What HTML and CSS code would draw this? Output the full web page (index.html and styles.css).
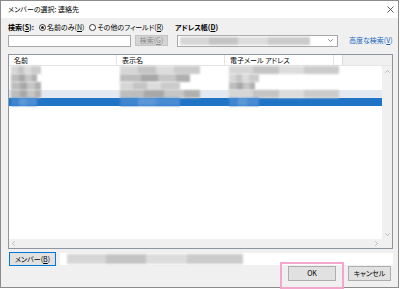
FILE: index.html
```html
<!DOCTYPE html>
<html lang="ja">
<head>
    <meta charset="UTF-8">
    <meta name="viewport" content="width=device-width, initial-scale=1.0">
    <title>メンバーの選択: 連絡先</title>
    <link rel="stylesheet" href="styles.css">
</head>
<body>
    <div class="window">
        <div class="titlebar">
            <span class="title">メンバーの選択: 連絡先</span>
            <svg class="close" width="7" height="7" viewBox="0 0 7 7">
                <path d="M0.5 0.5 L6.5 6.5 M6.5 0.5 L0.5 6.5" stroke="#333" stroke-width="0.8" fill="none"/>
            </svg>
        </div>

        <div class="content">
            <div class="search-row">
                <div class="search-opts">
                    <span class="bold">検索(<u>S</u>):</span>
                    <span class="radio checked"></span>
                    <span>名前のみ(<u>N</u>)</span>
                    <span class="radio"></span>
                    <span>その他のフィールド(<u>R</u>)</span>
                </div>
                <span class="bold">アドレス帳(<u>D</u>)</span>
            </div>

            <div class="field-row">
                <div class="textbox"></div>
                <div class="btn disabled search-btn">検索(<u>G</u>)</div>
                <div class="combo">
                    <span class="smudge combo-smudge"></span>
                    <svg class="chevron" width="5" height="3" viewBox="0 0 5 3">
                        <path d="M0.3 0.3 L2.5 2.5 L4.7 0.3" stroke="#555" stroke-width="0.7" fill="none"/>
                    </svg>
                </div>
                <a class="link" href="#">高度な検索(<u>V</u>)</a>
            </div>

            <div class="list">
                <div class="list-header">
                    <div class="col">名前</div>
                    <div class="col">表示名</div>
                    <div class="col">電子メール アドレス</div>
                    <div class="col-rest"></div>
                </div>
                <div class="list-main">
                    <div class="rows">
                        <div class="row">
                            <div class="cell"><span class="smudge w30"></span></div>
                            <div class="cell"><span class="smudge w80"></span></div>
                            <div class="cell"><span class="smudge w110"></span></div>
                        </div>
                        <div class="row">
                            <div class="cell"><span class="smudge w26 dark"></span></div>
                            <div class="cell"><span class="smudge w70 dark"></span></div>
                            <div class="cell"><span class="smudge w30"></span></div>
                        </div>
                        <div class="row">
                            <div class="cell"><span class="smudge w30 dark"></span></div>
                            <div class="cell"><span class="smudge w60"></span></div>
                            <div class="cell"><span class="smudge w26 dark"></span></div>
                        </div>
                        <div class="row hover">
                            <div class="cell"><span class="smudge w30 dark"></span></div>
                            <div class="cell"><span class="smudge w80 dark"></span></div>
                            <div class="cell"><span class="smudge w110"></span></div>
                        </div>
                        <div class="row selected">
                            <div class="cell"><span class="smudge w26 pale"></span></div>
                            <div class="cell"><span class="smudge w60 pale"></span></div>
                            <div class="cell"><span class="smudge w30 pale"></span></div>
                        </div>
                    </div>
                    <div class="vscroll">
                        <svg width="5" height="3" viewBox="0 0 5 3">
                            <path d="M0.3 2.7 L2.5 0.5 L4.7 2.7" stroke="#a0a0a0" stroke-width="0.7" fill="none"/>
                        </svg>
                        <svg width="5" height="3" viewBox="0 0 5 3">
                            <path d="M0.3 0.3 L2.5 2.5 L4.7 0.3" stroke="#a0a0a0" stroke-width="0.7" fill="none"/>
                        </svg>
                    </div>
                </div>
                <div class="hscroll-row">
                    <div class="hscroll">
                        <svg width="3" height="5" viewBox="0 0 3 5">
                            <path d="M2.7 0.3 L0.5 2.5 L2.7 4.7" stroke="#a0a0a0" stroke-width="0.7" fill="none"/>
                        </svg>
                        <svg width="3" height="5" viewBox="0 0 3 5">
                            <path d="M0.3 0.3 L2.5 2.5 L0.3 4.7" stroke="#a0a0a0" stroke-width="0.7" fill="none"/>
                        </svg>
                    </div>
                    <div class="corner"></div>
                </div>
            </div>

            <div class="member-row">
                <div class="btn default member-btn">メンバー(<u>B</u>)</div>
                <div class="member-field">
                    <span class="smudge member-smudge"></span>
                </div>
            </div>

            <div class="button-row">
                <div class="btn ok-btn">OK</div>
                <div class="btn cancel-btn">キャンセル</div>
            </div>
        </div>
    </div>
    <div class="highlight"></div>
</body>
</html>
```

FILE: styles.css
```css
body {
    margin: 0;
    width: 400px;
    height: 289px;
    background: #ffffff;
    font-family: "Noto Sans CJK JP", "Noto Sans", sans-serif;
    font-size: 7px;
    font-feature-settings: "palt";
    color: #000;
    position: relative;
    overflow: hidden;
}
u {
    text-decoration: underline;
    text-underline-offset: 1px;
}
.bold {
    font-weight: bold;
}
.window {
    width: 397px;
    height: 286px;
    border: 1px solid #8c8c8c;
    background: #f0f0f0;
    display: flex;
    flex-direction: column;
}
.titlebar {
    height: 17px;
    background: #ffffff;
    display: flex;
    align-items: center;
    justify-content: space-between;
    padding: 0 4px 0 7px;
}
.title {
    line-height: 9px;
}
.content {
    padding: 5px 5px 0 7px;
    display: flex;
    flex-direction: column;
}
.search-row {
    height: 9px;
    line-height: 9px;
    display: flex;
    align-items: center;
}
.search-opts {
    width: 167px;
    display: flex;
    align-items: center;
}
.radio {
    width: 5px;
    height: 5px;
    border: 1px solid #333;
    border-radius: 50%;
    margin: 0 1px 0 5px;
    background: #fff;
    position: relative;
}
.radio.checked::after {
    content: "";
    position: absolute;
    left: 1px;
    top: 1px;
    width: 3px;
    height: 3px;
    border-radius: 50%;
    background: #222;
}
.field-row {
    margin-top: 3px;
    height: 11px;
    display: flex;
    align-items: center;
}
.textbox {
    width: 121px;
    height: 10px;
    border: 1px solid #a8a8a8;
    background: #fff;
}
.btn {
    box-sizing: border-box;
    display: flex;
    align-items: center;
    justify-content: center;
    background: #e1e1e1;
    border: 1px solid #adadad;
    line-height: 9px;
}
.btn.disabled {
    background: #d4d4d4;
    border-color: #c4c4c4;
    color: #8a8a8a;
}
.btn.default {
    border-color: #0078d7;
}
.search-btn {
    width: 33px;
    height: 11px;
    margin-left: 4px;
}
.combo {
    width: 155px;
    height: 10px;
    margin-left: 9px;
    border: 1px solid #a8a8a8;
    background: #fff;
    display: flex;
    align-items: center;
    justify-content: space-between;
    padding-right: 4px;
    box-sizing: content-box;
}
.combo-smudge {
    width: 130px;
    height: 10px;
    margin-left: 2px;
}
.link {
    margin-left: 11px;
    color: #1a66c0;
    text-decoration: none;
    line-height: 9px;
}
/* blurred (mosaic) personal data */
.smudge {
    display: block;
    height: 8px;
    background: linear-gradient(90deg, #d6d6d6 0 22%, #c4c4c4 22% 45%, #dcdcdc 45% 68%, #cbcbcb 68%);
    filter: blur(0.8px);
}
.smudge.dark {
    background: linear-gradient(90deg, #bdbdbd 0 30%, #a8a8a8 30% 55%, #c6c6c6 55% 80%, #b0b0b0 80%);
}
.smudge.pale {
    background: linear-gradient(90deg, #3f86cf 0 30%, #5c97d6 30% 60%, #4a8cd2 60%);
}
.w26 { width: 26px; }
.w30 { width: 30px; }
.w60 { width: 60px; }
.w70 { width: 70px; }
.w80 { width: 80px; }
.w110 { width: 110px; }
.list {
    margin-top: 8px;
    height: 193px;
    border: 1px solid #8f96a0;
    background: #fff;
    display: flex;
    flex-direction: column;
}
.list-header {
    height: 10px;
    display: flex;
    line-height: 10px;
    border-bottom: 1px solid #e5e5e5;
}
.col {
    width: 108px;
    padding-left: 5px;
    box-sizing: border-box;
    border-right: 1px solid #e5e5e5;
    white-space: nowrap;
}
.col:nth-child(3) {
    width: 109px;
}
.col-rest {
    flex: 1;
    margin-left: 8px;
    background: #f0f0f0;
    border-left: 1px solid #d9d9d9;
}
.list-main {
    flex: 1;
    display: flex;
}
.rows {
    flex: 1;
}
.row {
    height: 8px;
    display: flex;
    align-items: center;
}
.row.hover {
    background: #e3e9f0;
}
.row.selected {
    background: #1f74c6;
}
.cell {
    width: 109px;
    padding-left: 2px;
    box-sizing: border-box;
}
.vscroll {
    width: 10px;
    background: #f0f0f0;
    display: flex;
    flex-direction: column;
    align-items: center;
    justify-content: space-between;
    padding: 4px 0 3px;
    box-sizing: border-box;
}
.vscroll svg, .hscroll svg {
    display: block;
}
.hscroll-row {
    height: 9px;
    display: flex;
}
.hscroll {
    flex: 1;
    background: #f0f0f0;
    display: flex;
    align-items: center;
    justify-content: space-between;
    padding: 0 4px 0 3px;
}
.corner {
    width: 10px;
    background: #f0f0f0;
}
.member-row {
    margin-top: 3px;
    height: 14px;
    display: flex;
    align-items: center;
}
.member-btn {
    width: 47px;
    height: 14px;
    margin-left: 1px;
}
.member-field {
    flex: 1;
    height: 12px;
    margin-left: 4px;
    background: #fff;
    display: flex;
    align-items: center;
}
.member-smudge {
    width: 176px;
    height: 10px;
    margin-left: 7px;
}
.button-row {
    height: 15px;
    display: flex;
    justify-content: flex-end;
    gap: 12px;
    padding-right: 2px;
}
.ok-btn {
    width: 48px;
    height: 15px;
}
.cancel-btn {
    width: 43px;
    height: 15px;
}
.highlight {
    position: absolute;
    left: 280px;
    top: 262px;
    width: 60px;
    height: 23px;
    border: 2px solid #f4a7cc;
}
```
